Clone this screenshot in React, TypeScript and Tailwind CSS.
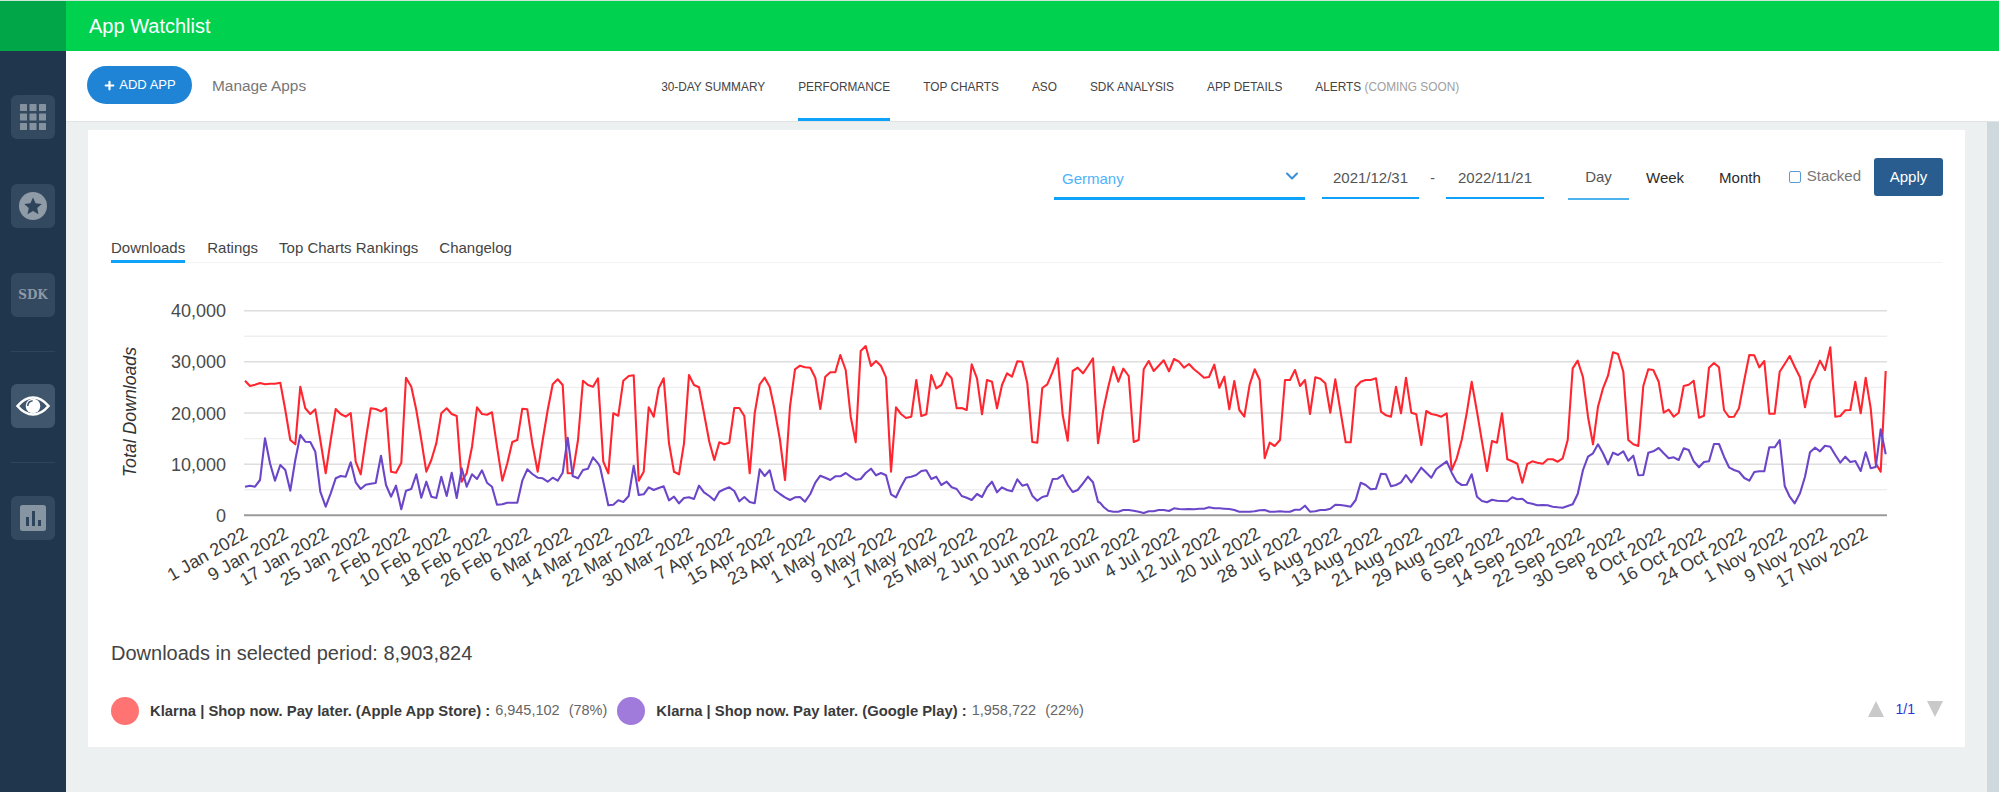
import { ChevronDown, Plus } from 'lucide-react'

const redTrace: [number, string][] = [
  [100, '435,272 450,288 465,284 480,279 495,283 510,281 525,281 541,278 556,360 571,450 586,463 601,290 616,355 631,372 646,358 661,450 677,550 692,450 707,357 722,372 737,380 752,369 767,515 782,553 797,450 812,355 827,357 843,364 858,354 873,545 888,548 904,518 918,263 934,290 949,360 964,450 979,545 994,510 1009,460 1024,370 1040,355 1055,372 1070,378 1085,575 1100,550 1116,470 1131,352 1146,372 1161,374 1176,367 1191,470 1207,572 1222,520 1237,456 1252,450 1267,356 1282,358 1297,460 1313,545 1328,450 1343,360 1358,283 1373,268 1388,285 1403,550 1418,550 1434,450 1449,272 1464,285 1479,290 1494,265'],
  [600, '10,515 25,550 40,370 55,377 70,272 86,258 101,256 116,572 131,545 146,352 161,380 176,295 191,265 207,460 222,545 237,553 252,460 267,255 282,285 297,292 312,370 328,455 343,510 358,457 373,463 388,458 403,354 418,354 433,378 449,550 464,370 479,283 494,263 509,290 524,360 540,450 555,570 570,350 585,238 600,227 615,232 631,233 646,263 661,357 676,260 691,247 706,247 721,195 737,240 752,380 767,457 782,183 797,168 813,228 828,213 843,228 858,262 873,545 888,352 903,372 918,384 934,380 949,270 964,378 979,373 994,255 1009,295 1024,285 1040,248 1055,265 1070,355 1085,354 1100,360 1115,223 1131,265 1146,373 1161,270 1176,275 1191,355 1206,285 1221,250 1236,260 1252,214 1267,215 1282,280 1297,456 1312,458 1327,294 1342,283 1358,245 1373,205 1388,375 1403,452 1418,243 1433,233 1449,250 1464,228 1479,205 1494,460'],
  [1100, '10,360 25,290 40,230 55,275 70,236 86,258 101,456 116,450 131,238 146,213 161,243 176,227 191,211 207,244 222,207 237,215 252,233 267,222 282,238 297,250 312,263 327,261 343,224 358,293 373,260 388,358 403,273 418,360 433,380 449,283 464,238 479,270 494,505 509,458 524,468 540,450 555,270 570,270 585,240 600,288 615,270 630,372 646,262 661,266 676,280 691,368 706,268 721,360 737,457 752,457 767,292 782,275 797,270 812,270 828,265 843,365 858,376 873,380 888,290 903,370 918,263 934,368 949,373 964,465 979,363 994,372 1009,375 1024,380 1040,370 1055,540 1070,505 1085,450 1100,370 1115,275 1131,365 1146,455 1161,543 1176,453 1191,458'],
  [1500, '6,370 22,508 37,514 52,521 67,578 82,522 97,514 112,518 128,521 143,508 158,508 173,515 188,505 203,450 218,235 233,212 249,262 264,380 279,463 294,350 309,295 324,257 339,187 354,192 370,245 385,450 400,463 415,468 430,288 445,238 460,240 476,275 491,368 506,359 521,380 536,368 551,288 566,284 581,272 597,383 612,377 627,233 642,219 657,232 672,360 687,381 702,380 717,355 733,270 748,195 763,196 778,232 793,213 808,371 824,371 839,245 854,222 869,198 884,230 900,262 915,352 930,275 945,248 960,212 975,240 991,172 1006,380 1021,378 1036,361 1051,360 1066,275 1082,370 1097,263 1112,355 1127,520 1142,545 1157,243'],
]

const purpleTrace: [number, string][] = [
  [100, '435,590 450,587 465,590 480,570 495,445 510,520 525,572 541,525 556,540 571,602 586,510 601,435 616,455 631,456 646,485 661,605 677,650 692,610 707,565 722,558 737,560 752,517 767,577 782,597 797,584 812,581 827,579 843,497 858,585 873,620 888,587 904,658 918,602 934,597 949,553 964,623 979,575 994,620 1009,624 1024,560 1040,618 1055,548 1070,624 1085,535 1100,590 1116,553 1131,567 1146,541 1161,578 1176,590 1191,644 1207,643 1222,638 1237,638 1252,638 1267,572 1282,538 1297,552 1313,563 1328,565 1343,575 1358,563 1373,572 1388,548 1403,443 1418,558 1434,565 1449,540 1464,536 1479,502 1494,520'],
  [600, '0,530 10,575 25,646 40,644 55,631 70,636 86,618 101,527 116,615 131,613 146,592 161,600 176,594 191,589 207,631 222,620 237,640 252,624 267,622 282,627 297,587 312,607 328,618 343,631 358,605 373,598 388,592 403,603 418,634 433,621 449,636 464,640 479,538 494,558 509,541 524,600 540,612 555,622 570,630 585,622 600,621 615,635 631,612 646,578 661,557 676,563 691,570 706,559 721,559 737,549 752,560 767,569 782,567 797,549 813,536 828,556 843,549 858,556 873,613 888,622 903,590 918,563 934,560 949,555 964,543 979,541 994,567 1009,560 1024,585 1040,575 1055,592 1070,597 1085,618 1100,623 1115,630 1131,612 1146,621 1161,592 1176,575 1191,607 1206,592 1221,600 1236,604 1252,568 1267,587 1282,583 1297,617 1312,632 1327,621 1342,617 1358,567 1373,566 1388,555 1403,585 1418,606 1433,600 1449,580 1464,560 1479,577 1494,635'],
  [1100, '0,638 10,650 25,662 40,665 55,665 70,660 86,660 101,662 116,665 131,669 146,664 161,664 176,660 191,660 207,663 222,655 237,657 252,658 267,657 282,658 297,656 312,656 327,652 343,655 358,655 373,656 388,657 403,660 418,665 433,665 449,665 464,664 479,661 494,660 509,665 524,665 540,664 555,665 570,665 585,659 600,659 615,647 630,665 646,664 661,660 676,660 691,656 706,644 721,645 737,647 752,650 767,630 782,578 797,585 812,598 828,596 843,551 858,553 873,589 888,585 903,577 918,555 934,577 949,555 964,533 979,548 994,563 1009,537 1024,526 1040,514 1055,548 1070,575 1085,585 1100,584 1115,553 1131,620 1146,633 1161,637 1176,629 1191,632'],
  [1500, '6,633 22,634 37,622 52,628 67,626 82,638 97,641 112,646 128,645 143,646 158,650 173,652 188,653 203,648 218,643 233,612 249,540 264,500 279,490 294,463 309,490 324,523 339,488 354,495 370,484 385,512 400,497 415,556 430,555 445,488 460,484 476,474 491,490 506,505 521,502 536,510 551,475 566,480 581,514 597,532 612,516 627,514 642,462 657,462 672,500 687,532 702,540 717,545 733,564 748,572 763,546 778,544 793,544 808,472 824,472 839,450 854,588 869,620 884,640 900,610 915,560 930,487 945,473 960,484 975,467 991,470 1006,495 1021,518 1036,500 1051,516 1066,513 1082,543 1097,487 1112,535 1127,531 1142,418 1157,493'],
]

const toPoints = (trace: [number, string][]) =>
  trace
    .flatMap(([left, pts]) =>
      pts.split(' ').map((p) => {
        const [x, y] = p.split(',').map(Number)
        return `${(left + x / 3).toFixed(1)},${(290 + y / 3).toFixed(1)}`
      }),
    )
    .join(' ')

const dateLabels = [
  '1 Jan', '9 Jan', '17 Jan', '25 Jan', '2 Feb', '10 Feb', '18 Feb', '26 Feb', '6 Mar', '14 Mar', '22 Mar',
  '30 Mar', '7 Apr', '15 Apr', '23 Apr', '1 May', '9 May', '17 May', '25 May', '2 Jun', '10 Jun', '18 Jun',
  '26 Jun', '4 Jul', '12 Jul', '20 Jul', '28 Jul', '5 Aug', '13 Aug', '21 Aug', '29 Aug', '6 Sep', '14 Sep',
  '22 Sep', '30 Sep', '8 Oct', '16 Oct', '24 Oct', '1 Nov', '9 Nov', '17 Nov',
]

const navItems = ['30-DAY SUMMARY', 'PERFORMANCE', 'TOP CHARTS', 'ASO', 'SDK ANALYSIS', 'APP DETAILS']
const yTicks = [
  { label: '40,000', y: 310.7 },
  { label: '30,000', y: 361.8 },
  { label: '20,000', y: 413 },
  { label: '10,000', y: 464.2 },
  { label: '0', y: 515.3 },
]
const minorTicks = [336.3, 387.4, 438.6, 489.8]

const Chart = () => (
  <svg viewBox="88 263 1877 362" className="block h-[362px] w-full">
    {yTicks.slice(0, 4).map((t) => (
      <line key={t.y} x1={244} x2={1887} y1={t.y} y2={t.y} stroke="#dedede" strokeWidth={1.4} />
    ))}
    {minorTicks.map((y) => (
      <line key={y} x1={244} x2={1887} y1={y} y2={y} stroke="#efefef" strokeWidth={1.4} />
    ))}
    <polyline points={toPoints(redTrace)} fill="none" stroke="#ff2630" strokeWidth={2.1} strokeLinejoin="round" />
    <polyline points={toPoints(purpleTrace)} fill="none" stroke="#6b46c8" strokeWidth={2.1} strokeLinejoin="round" />
    <line x1={244} x2={1887} y1={515.3} y2={515.3} stroke="#9a9a9a" strokeWidth={2} />
    {yTicks.map((t) => (
      <text key={t.label} x={226} y={t.y + 6.5} textAnchor="end" fontSize={18} fill="#4a4a4a">
        {t.label}
      </text>
    ))}
    <text
      transform="translate(136 412) rotate(-90)"
      textAnchor="middle"
      fontSize={17.7}
      fontStyle="italic"
      fill="#333"
    >
      Total Downloads
    </text>
    {dateLabels.map((d, i) => (
      <text
        key={d}
        transform={`translate(${249 + i * 40.5} 537) rotate(-30)`}
        textAnchor="end"
        fontSize={18}
        fill="#3c3c3c"
      >
        {d} 2022
      </text>
    ))}
  </svg>
)

const SideButton = ({ active, children }: { active?: boolean; children: React.ReactNode }) => (
  <div
    className={`flex h-[44px] w-[44px] items-center justify-center rounded-md ${active ? 'bg-[#3f566d]' : 'bg-[#33495f]'}`}
  >
    {children}
  </div>
)

const Sidebar = () => (
  <div className="flex w-[66px] shrink-0 flex-col">
    <div className="h-[50px] bg-[#01a648]" />
    <div className="flex flex-1 flex-col items-center bg-[#20364d] pt-[44px]">
      <SideButton>
        <svg width="26" height="26" viewBox="0 0 26 26" fill="#84919e">
          {[0, 9.5, 19].flatMap((y) =>
            [0, 9.5, 19].map((x) => <rect key={`${x}-${y}`} x={x} y={y} width="7" height="7" rx="0.5" />),
          )}
        </svg>
      </SideButton>
      <div className="mt-[45px]">
        <SideButton>
          <svg width="28" height="28" viewBox="0 0 28 28">
            <circle cx="14" cy="14" r="14" fill="#8f9ba6" />
            <polygon
              points="14,5.5 16.6,11.2 22.8,11.9 18.2,16 19.5,22.2 14,19 8.5,22.2 9.8,16 5.2,11.9 11.4,11.2"
              fill="#2d445b"
            />
          </svg>
        </SideButton>
      </div>
      <div className="mt-[45px]">
        <SideButton>
          <span className="font-['DejaVu_Serif',serif] text-[12px] font-bold text-[#8d99a6]">SDK</span>
        </SideButton>
      </div>
      <div className="mt-[34px] h-px w-[44px] bg-[#2f4459]" />
      <div className="mt-[32px]">
        <SideButton active>
          <svg width="34" height="20" viewBox="0 0 34 20" fill="none">
            <path
              d="M1.5 10C7 3.5 12 1.5 17 1.5S27 3.5 32.5 10C27 16.5 22 18.5 17 18.5S7 16.5 1.5 10Z"
              stroke="#fff"
              strokeWidth="2.6"
            />
            <circle cx="17" cy="10" r="7.3" fill="#fff" />
            <path d="M11.8 10C11.8 7.2 13.6 5.2 16.6 4.8" stroke="#3f566d" strokeWidth="1.6" />
          </svg>
        </SideButton>
      </div>
      <div className="mt-[34px] h-px w-[44px] bg-[#2f4459]" />
      <div className="mt-[33px]">
        <SideButton>
          <svg width="26" height="26" viewBox="0 0 26 26">
            <rect width="26" height="26" rx="2.5" fill="#8794a1" />
            <rect x="6" y="12" width="3" height="9" fill="#2d445b" />
            <rect x="12" y="6" width="3" height="15" fill="#2d445b" />
            <rect x="18" y="15" width="3" height="6" fill="#2d445b" />
          </svg>
        </SideButton>
      </div>
    </div>
  </div>
)

const Toolbar = () => (
  <div className="flex h-[71px] shrink-0 items-stretch border-b border-[#dfe3e5] bg-white">
    <div className="ml-[21px] mt-[15px] flex h-[38px] w-[105px] items-center justify-center rounded-full bg-[#2084d6] text-[13px] text-white">
      <Plus size={13} strokeWidth={4} className="mr-[3px]" />
      ADD APP
    </div>
    <div className="ml-[20px] mt-[25px] h-[20px] text-[15.4px] leading-[20px] text-[#777]">Manage Apps</div>
    <div className="ml-[355px] flex gap-[33px] text-[11.85px] text-[#444]">
      {navItems.map((item) => (
        <div
          key={item}
          className={`flex items-center border-b-[3px] pt-[6px] ${item === 'PERFORMANCE' ? 'border-[#0ea2fb]' : 'border-transparent'}`}
        >
          {item}
        </div>
      ))}
      <div className="flex items-center border-b-[3px] border-transparent pt-[6px]">
        ALERTS&nbsp;<span className="text-[#a0a0a0]">(COMING SOON)</span>
      </div>
    </div>
  </div>
)

const Filters = () => (
  <div className="flex h-[42px] items-stretch justify-end pr-[22px]">
    <div className="flex w-[251px] items-center justify-between border-b-[3px] border-[#0ea2fb] pl-[8px] pr-[3px] pt-[4px] text-[15px] text-[#4db3fb]">
      Germany
      <ChevronDown size={20} strokeWidth={2.4} className="mb-[7px] text-[#3a8ed8]" />
    </div>
    <div className="ml-[17px] mb-[1px] flex w-[97px] items-center justify-center border-b-2 border-[#0ea2fb] pt-[2px] text-[15px] text-[#555]">
      2021/12/31
    </div>
    <div className="flex w-[27px] items-center justify-center pb-[2px] text-[14px] text-[#555]">-</div>
    <div className="mb-[1px] flex w-[98px] items-center justify-center border-b-2 border-[#0ea2fb] pt-[2px] text-[15px] text-[#555]">
      2022/11/21
    </div>
    <div className="ml-[24px] flex w-[61px] items-center justify-center border-b-2 border-[#4db3ee] pb-[1px] text-[15px] text-[#555]">
      Day
    </div>
    <div className="ml-[17px] flex items-center pb-[2px] text-[15px] text-[#2b2b2b]">Week</div>
    <div className="ml-[35px] flex items-center pb-[2px] text-[15px] text-[#2b2b2b]">Month</div>
    <div className="ml-[28px] flex items-center pb-[5px] text-[15px] text-[#777]">
      <span className="mr-[6px] h-[12px] w-[12px] rounded-[2px] border border-[#5b9bd5]" />
      Stacked
    </div>
    <div className="ml-[13px] mb-[4px] flex w-[69px] items-center justify-center rounded-[3px] bg-[#2a5d8f] text-[15px] text-white">
      Apply
    </div>
  </div>
)

const Tabs = () => (
  <div className="mx-[23px] mt-[37px] flex h-[26px] gap-[21px] border-b border-[#f3f3f3] text-[15px] text-[#444]">
    <div className="h-[26px] border-b-[3px] border-[#0ea2fb] leading-[22px]">Downloads</div>
    <div className="ml-px leading-[22px]">Ratings</div>
    <div className="leading-[22px]">Top Charts Rankings</div>
    <div className="leading-[22px]">Changelog</div>
  </div>
)

const LegendItem = ({ color, name, count, share }: { color: string; name: string; count: string; share: string }) => (
  <div className="flex items-center">
    <span className={`h-[28px] w-[28px] rounded-full ${color}`} />
    <span className="ml-[11px] text-[14.8px] font-bold text-[#3a3a3a]">{name} :</span>
    <span className="ml-[5px] text-[14.5px] text-[#666]">{count}</span>
    <span className="ml-[9px] text-[14.5px] text-[#666]">{share}</span>
  </div>
)

const App = () => {
  return (
    <div className="flex h-[792px] w-[1999px] overflow-hidden border-t border-[#cfe7d8] bg-white font-['Liberation_Sans',Arial,sans-serif]">
      <Sidebar />
      <div className="flex min-w-0 flex-1 flex-col">
        <div className="flex h-[50px] shrink-0 items-center bg-[#00d14f] pl-[23px] text-[20px] text-white">
          App Watchlist
        </div>
        <Toolbar />
        <div className="flex flex-1">
          <div className="flex-1 bg-[#ecf0f1] pb-[45px] pl-[22px] pr-[22px] pt-[8px]">
            <div className="h-[617px] bg-white pt-[28px]">
              <Filters />
              <Tabs />
              <Chart />
              <div className="ml-[23px] mt-[16px] h-[24px] text-[20px] leading-[24px] text-[#444]">
                Downloads in selected period: 8,903,824
              </div>
              <div className="ml-[23px] mt-[32px] flex items-center pr-[22px]">
                <LegendItem
                  color="bg-[#ff7373]"
                  name="Klarna | Shop now. Pay later. (Apple App Store)"
                  count="6,945,102"
                  share="(78%)"
                />
                <div className="ml-[10px]">
                  <LegendItem
                    color="bg-[#a07bdc]"
                    name="Klarna | Shop now. Pay later. (Google Play)"
                    count="1,958,722"
                    share="(22%)"
                  />
                </div>
                <div className="ml-auto flex items-center pb-[4px]">
                  <span className="h-0 w-0 border-x-[8px] border-b-[16px] border-x-transparent border-b-[#c9c9c9]" />
                  <span className="ml-[12px] text-[14px] text-[#2a35d9]">1/1</span>
                  <span className="ml-[12px] h-0 w-0 border-x-[8px] border-t-[16px] border-x-transparent border-t-[#c9c9c9]" />
                </div>
              </div>
            </div>
          </div>
          <div className="w-[12px] bg-[#cfd8dc]" />
        </div>
      </div>
    </div>
  )
}

export default App
